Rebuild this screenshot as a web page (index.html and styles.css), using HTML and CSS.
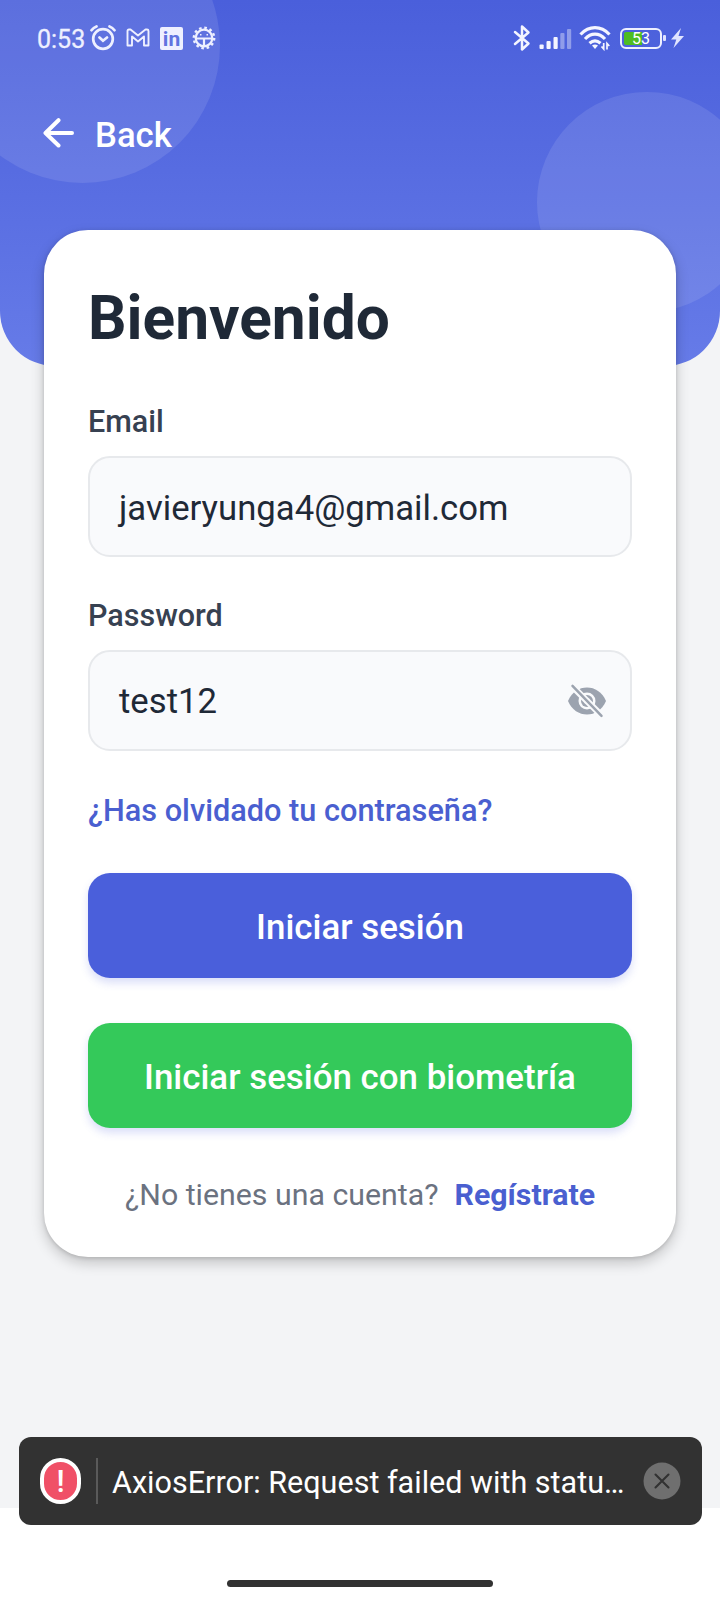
FILE: index.html
```html
<!DOCTYPE html>
<html lang="es">
<head>
<meta charset="utf-8">
<title>Bienvenido</title>
<link rel="stylesheet" href="styles.css">
</head>
<body>
<div class="screen">
  <div class="hero">
    <span class="bubble bubble-left"></span>
    <span class="bubble bubble-right"></span>
  </div>

  <header class="status">
    <span class="time">0:53</span>
    <svg class="ic-alarm" width="26" height="26" viewBox="0 0 26 26" fill="none" stroke="#eef0ff" stroke-width="2.7" stroke-linecap="round"><circle cx="13" cy="14" r="9.8"/><path d="M1.500 5.200Q3.500 2.500 6.500 1.400M24.500 5.200Q22.500 2.500 19.500 1.400M9.500 12.500L13 15.700L17 12.500"/></svg>
    <svg class="ic-mail" width="24" height="20" viewBox="0 0 24 20" fill="none" stroke="#eef0ff" stroke-width="1.9" stroke-linejoin="round"><path d="M1.500 3Q1.500 1.500 3 1.500H4.500L12 7.500L19.500 1.500H21Q22.500 1.500 22.500 3V17.500H18V8.500L12 13.500L6 8.500V17.500H1.500Z"/></svg>
    <span class="linkedin">in</span>
    <svg class="ic-gear" width="24" height="24" viewBox="0 0 24 24" fill="none" stroke="#eef0ff"><circle cx="12" cy="12" r="8.300" stroke-width="2.200"/><circle cx="12" cy="12" r="10.200" stroke-width="2.400" stroke-dasharray="2.600 2.741"/><path d="M4 12.500H20M12 12.500V20" stroke-width="2.200"/><path d="M8 8.700H9.500M14.500 8.700H16" stroke-width="1.500"/></svg>
    <span class="spacer"></span>
    <svg class="ic-bt" width="18" height="28" viewBox="0 0 18 28" fill="none" stroke="#f4f5ff" stroke-width="2.500" stroke-linejoin="round" stroke-linecap="round"><path d="M2 8L15.500 19.500L9 25.500V2.500L15.500 8.500L2 20"/></svg>
    <svg class="ic-signal" width="33" height="22" viewBox="0 0 33 22" fill="#f4f5ff"><rect x="0.500" y="16.500" width="4.200" height="4.500" rx="1"/><rect x="7.500" y="13" width="4.200" height="8" rx="1"/><rect x="14.500" y="9" width="4.200" height="12" rx="1"/><g opacity=".4"><rect x="21.300" y="5" width="4.200" height="16" rx="1"/><rect x="28" y="1" width="4.200" height="20" rx="1"/></g></svg>
    <svg class="ic-wifi" width="32" height="26" viewBox="0 0 32 26" fill="none" stroke="#f4f5ff" stroke-width="3.200"><path d="M1.500 9.500Q8 2.700 16 2.700T30.500 9.500M6 14Q10.500 9.200 16 9.200T26 14M10.500 18.300Q16 13.500 21.500 18.300"/><path d="M13 20.500Q16 18.500 19 20.500L16 24Z" fill="#f4f5ff" stroke="none"/><path d="M24.700 18V24L22.500 21.500M28 24.500V18.500L30.300 21" stroke-width="1.700"/></svg>
    <span class="battery"><span class="level"></span><span class="percent">53</span></span>
    <span class="battery-tip"></span>
    <svg class="ic-bolt" width="13" height="20" viewBox="0 0 13 20" fill="#e1e5ff"><path d="M10 0L0 11.500H5.300L2.500 20L13 8H7.500Z"/></svg>
  </header>

  <nav class="back">
    <svg width="32" height="30" viewBox="0 0 32 30" fill="none" stroke="#fff" stroke-width="4" stroke-linecap="round" stroke-linejoin="round"><path d="M15.500 2.200L2.500 15L15.500 27.500M3 15H29"/></svg>
    <span>Back</span>
  </nav>

  <main class="card">
    <h1>Bienvenido</h1>
    <div class="label">Email</div>
    <div class="field">javieryunga4@gmail.com</div>
    <div class="label label-password">Password</div>
    <div class="field field-password"><span>test12</span>
      <svg width="40" height="34" viewBox="0 0 40 34"><path d="M1 17C5 8 12 3.500 20 3.500S35 8 39 17C35 26 28 30.500 20 30.500S5 26 1 17Z" fill="#9ca3af"/><circle cx="20" cy="17" r="8.500" fill="#f9fafc"/><circle cx="20" cy="17" r="6" fill="#9ca3af"/><circle cx="20" cy="17" r="3" fill="#f9fafc"/><path d="M5 2L36 33" stroke="#f9fafc" stroke-width="6.500"/><path d="M5.500 1.800L34.500 31.800" stroke="#9ca3af" stroke-width="2.500" stroke-linecap="round"/></svg>
    </div>
    <a class="forgot">¿Has olvidado tu contraseña?</a>
    <div class="button primary">Iniciar sesión</div>
    <div class="button biometric">Iniciar sesión con biometría</div>
    <div class="signup"><span>¿No tienes una cuenta?</span><a>Regístrate</a></div>
  </main>

  <div class="toast">
    <span class="alert">!</span>
    <span class="divider"></span>
    <span class="message">AxiosError: Request failed with statu…</span>
    <svg width="38" height="38" viewBox="0 0 38 38"><circle cx="19" cy="19" r="18.500" fill="#6f6f6f"/><path d="M12.500 12.500L25.500 25.500M25.500 12.500L12.500 25.500" stroke="#323232" stroke-width="2.100" stroke-linecap="round"/></svg>
  </div>
  <div class="home-bar"></div>
</div>
</body>
</html>
```
FILE: styles.css
```css
* { box-sizing: border-box; }
body { margin: 0; background: #fff; font-family: Roboto, sans-serif; }
.screen {
  position: relative;
  width: 720px;
  height: 1600px;
  overflow: hidden;
  display: flex;
  flex-direction: column;
  background: linear-gradient(#f3f4f6 1508px, #fff 1508px);
}
/* Decorative backdrop behind the header and card */
.hero {
  position: absolute;
  top: 0; left: 0;
  width: 720px;
  height: 366px;
  border-radius: 0 0 55px 55px;
  overflow: hidden;
  background: linear-gradient(#4a5fdb, #667be8);
}
.bubble { position: absolute; border-radius: 50%; }
.bubble-left { width: 275px; height: 275px; left: -55px; top: -92px; background: rgba(255,255,255,.1); }
.bubble-right { width: 220px; height: 220px; left: 537px; top: 92px; background: rgba(255,255,255,.1); }

.status {
  position: relative;
  height: 76px;
  padding: 0 36px 0 37px;
  display: flex;
  align-items: center;
  color: #eef0ff;
}
.time { font-size: 25px; width: 53px; padding-top: 3px; -webkit-text-stroke: .3px #eef0ff; }
.ic-mail { margin-left: 10px; }
.linkedin {
  margin-left: 10px;
  width: 23px; height: 23px;
  border-radius: 2px;
  background: #eef0ff;
  color: #6073df;
  font: 700 21px/24px Roboto, sans-serif;
  text-align: center;
}
.ic-gear { margin-left: 9px; }
.spacer { flex: 1; }
.ic-signal { margin: 2px 0 0 8px; }
.ic-wifi { margin-left: 7px; }
.battery {
  position: relative;
  margin-left: 9px;
  width: 42px; height: 21px;
  border: 2px solid #eef0ff;
  border-radius: 6px;
  display: flex;
  padding: 2px;
}
.level { width: 18px; border-radius: 2px 0 0 2px; background: #4fbd22; }
.percent {
  position: absolute;
  inset: 0;
  font: 400 16px/18px Roboto, sans-serif;
  text-align: center;
  color: #fff;
}
.battery-tip { width: 3px; height: 6px; margin-left: 1px; border-radius: 1px; background: #dfe3ff; }
.ic-bolt { margin-left: 5px; }

.back {
  position: relative;
  height: 154px;
  padding: 42px 0 0 43px;
  display: flex;
  align-items: flex-start;
  color: #fff;
  font-size: 34.7px;
  line-height: 34px;
  font-weight: 500;
}
.back span { margin-left: 20px; }

.card {
  position: relative;
  margin: 0 44px;
  height: 1027px;
  padding: 49px 44px 0;
  border-radius: 44px;
  background: #fff;
  box-shadow: 0 6px 14px rgba(0,0,0,.2), 0 1px 4px rgba(0,0,0,.15);
  display: flex;
  flex-direction: column;
}
h1 { margin: 0; font-size: 60.4px; line-height: 80px; font-weight: 700; color: #1f2937; }
.label { margin-top: 45px; height: 52px; font-size: 30.5px; line-height: 36px; font-weight: 500; color: #374151; }
.label-password { margin-top: 41px; height: 52px; }
.field {
  height: 101px;
  flex: none;
  padding: 2px 23px 0 29px;
  border: 2px solid #e7e9ec;
  border-radius: 22px;
  background: #f9fafc;
  color: #1f2937;
  font-size: 34.7px;
  display: flex;
  align-items: center;
  justify-content: space-between;
}
.field-password { padding: 1px 23px 0 29px; }
.forgot { margin-top: 42px; height: 80px; font-size: 30.7px; line-height: 36px; font-weight: 500; color: #4a5fd0; }
.button {
  height: 105px;
  flex: none;
  padding-top: 4px;
  border-radius: 22px;
  display: flex;
  align-items: center;
  justify-content: center;
  color: #fff;
  font-size: 34.9px;
  font-weight: 500;
  box-shadow: 0 5px 8px rgba(74,95,219,.2);
}
.primary { background: #4a5fdb; }
.biometric { margin-top: 45px; background: #34c95a; }
.signup { margin-top: 48px; display: flex; justify-content: center; gap: 16px; font-size: 30.3px; line-height: 37px; color: #6b7280; }
.signup a { font-weight: 700; color: #4a5fd0; }

.toast {
  position: absolute;
  left: 19px; top: 1437px;
  width: 683px; height: 88px;
  padding: 0 21px;
  border-radius: 12px;
  background: #323232;
  display: flex;
  align-items: center;
  color: #fff;
}
.alert {
  width: 41px; height: 46px;
  border: 4px solid #fff;
  border-radius: 21px;
  background: #f05067;
  font: 500 31px/39px Roboto, sans-serif;
  text-align: center;
}
.divider { width: 2px; height: 46px; margin-left: 15px; background: #5a5a5a; }
.message { margin-left: 14px; flex: 1; font-size: 30.55px; white-space: nowrap; padding-top: 2px; }
.home-bar { position: absolute; left: 227px; top: 1580px; width: 266px; height: 7px; border-radius: 4px; background: #323232; }
```
